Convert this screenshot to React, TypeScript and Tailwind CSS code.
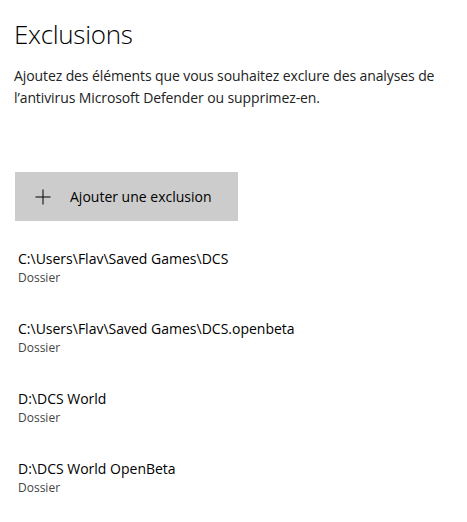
import React from 'react';

const exclusions = [
  { path: 'C:\\Users\\Flav\\Saved Games\\DCS', kind: 'Dossier' },
  { path: 'C:\\Users\\Flav\\Saved Games\\DCS.openbeta', kind: 'Dossier' },
  { path: 'D:\\DCS World', kind: 'Dossier' },
  { path: 'D:\\DCS World OpenBeta', kind: 'Dossier' },
];

const PlusIcon: React.FC = () => (
  <svg width="16" height="16" viewBox="0 0 16 16" className="shrink-0">
    <path d="M8 0.5V15.5M0.5 8H15.5" stroke="#000" strokeWidth="1" fill="none" />
  </svg>
);

const App: React.FC = () => {
  return (
    <div
      className="w-[467px] h-[522px] bg-white text-black overflow-hidden"
      style={{ fontFamily: '"Open Sans", "Noto Sans", sans-serif' }}
    >
      <div className="pl-[14px] pr-4 pt-[15px]">
        <h1 className="text-[26px] font-light leading-[38px] tracking-[-0.3px]">Exclusions</h1>
        <p className="mt-[12px] text-[14px] leading-[22px] text-[#222] w-[450px] tracking-[-0.1px]">
          Ajoutez des éléments que vous souhaitez exclure des analyses de l’antivirus Microsoft Defender ou supprimez-en.
        </p>

        <button className="mt-[63px] ml-px flex items-center w-[223px] h-[49px] bg-[#cccccc] pl-[20px]">
          <PlusIcon />
          <span className="ml-[19px] text-[14px] text-black">Ajouter une exclusion</span>
        </button>

        <ul className="mt-[28px] pl-[4px]">
          {exclusions.map((item) => (
            <li key={item.path} className="h-[70px]">
              <div className="text-[14px] leading-[20px] text-black">{item.path}</div>
              <div className="text-[12px] leading-[18px] text-[#444]">{item.kind}</div>
            </li>
          ))}
        </ul>
      </div>
    </div>
  );
};

export default App;
